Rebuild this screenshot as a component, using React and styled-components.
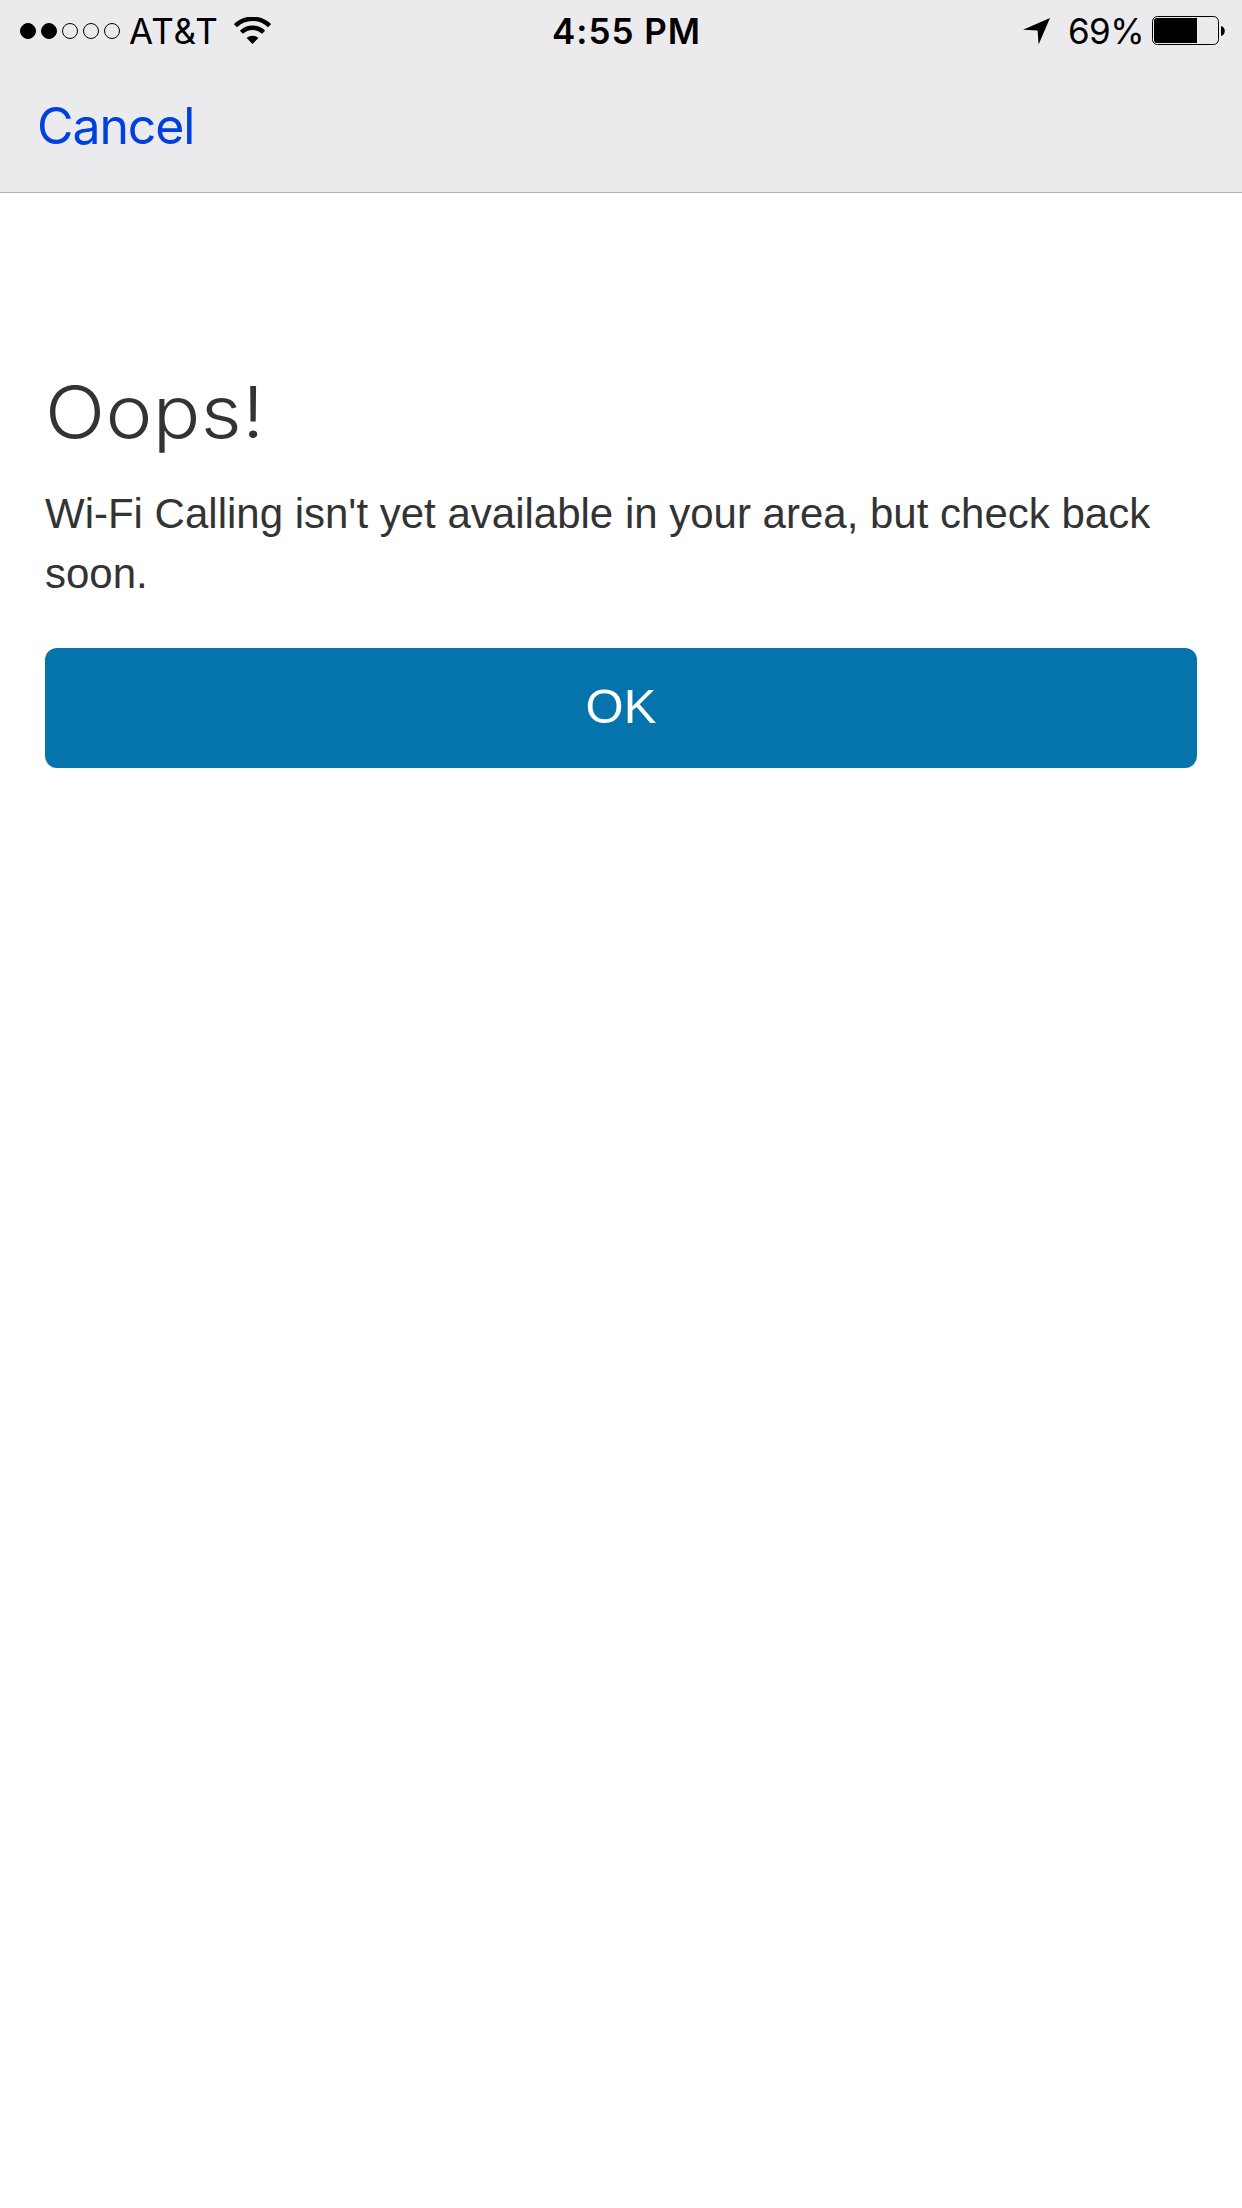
import React from "react";
import styled, { createGlobalStyle } from "styled-components";

const GlobalStyle = createGlobalStyle`
  * {
    box-sizing: border-box;
  }

  body {
    margin: 0;
    background: #fff;
  }
`;

const Screen = styled.div`
  width: 1242px;
  min-height: 2208px;
  background: #fff;
  font-family: "Liberation Sans", Arial, sans-serif;
  color: #333;
`;

const Header = styled.header`
  height: 193px;
  background: #ebebed;
  border-bottom: 1px solid #b2b2b4;
`;

const StatusBar = styled.div`
  display: grid;
  grid-template-columns: 1fr auto 1fr;
  height: 60px;
  padding: 0 17px 0 20px;
  font-family: Inter, sans-serif;
  font-size: 35px;
  line-height: 60px;
  color: #000;
  white-space: nowrap;

  svg {
    display: block;
    flex: none;
  }
`;

const StatusGroup = styled.div`
  display: flex;
  align-items: center;
  justify-content: ${({ $end }) => ($end ? "flex-end" : "flex-start")};
`;

const Signal = styled.div`
  display: flex;
  gap: 5px;
  margin-right: 9px;
`;

const Dot = styled.span`
  width: 16px;
  height: 16px;
  border: 1px solid #000;
  border-radius: 50%;
  background: ${({ $filled }) => ($filled ? "#000" : "transparent")};
`;

const Carrier = styled.span`
  margin: 1px 15px 0 0;
  letter-spacing: 1px;
`;

const Time = styled.span`
  padding: 1px 0 0 8px;
  font-weight: 600;
  letter-spacing: 1px;
`;

const Percent = styled.span`
  margin: 1px 8px 0 18px;
  letter-spacing: -0.6px;
`;

const NavBar = styled.nav`
  display: flex;
  align-items: center;
  height: 132px;
  padding-left: 37px;
`;

const Cancel = styled.button`
  padding: 0;
  border: 0;
  background: none;
  font: 400 50px/60px Inter, sans-serif;
  letter-spacing: -1.1px;
  color: #0040dd;
`;

const Content = styled.main`
  padding: 174px 45px 0;
`;

const Title = styled.h1`
  width: fit-content;
  margin: 0;
  font: 300 72px/90px Inter, sans-serif;
  letter-spacing: 0.3px;
  transform: scaleX(1.1);
  transform-origin: left;
`;

const Message = styled.p`
  margin: 27px 0 44px;
  font-size: 42px;
  line-height: 60px;
`;

const OkButton = styled.button`
  display: block;
  width: 100%;
  height: 120px;
  padding: 0 0 5px;
  border: 0;
  border-radius: 12px;
  background: #0574ac;
  font: 400 49px/60px "Liberation Sans", Arial, sans-serif;
  color: #fff;
`;

const WifiIcon = () => (
  <svg width="37" height="27" viewBox="0 0 37 27" fill="none" stroke="#000">
    <path d="M1.5 8.7a24.2 24.2 0 0 1 34 0" strokeWidth="4.4" />
    <path d="M7.4 15.3a15.8 15.8 0 0 1 22.2 0" strokeWidth="4.4" />
    <path d="M12.6 21.1a8.5 8.5 0 0 1 11.8 0L18.5 27z" fill="#000" stroke="none" />
  </svg>
);

const LocationIcon = () => (
  <svg width="27" height="29" viewBox="0 0 27 29">
    <path d="M27 2 15.6 28.5 14.6 14.4 0 13.8z" />
  </svg>
);

const BatteryIcon = () => (
  <svg width="73" height="29" viewBox="0 0 73 29">
    <rect x=".5" y=".5" width="66" height="28" rx="5" fill="none" stroke="#000" />
    <path d="M5 2h40v25H5a3 3 0 0 1-3-3V5a3 3 0 0 1 3-3z" />
    <path d="M69 10c5 1 5 9 0 10z" />
  </svg>
);

const App = () => {
  return (
    <>
      <GlobalStyle />
      <Screen>
        <Header>
          <StatusBar>
            <StatusGroup>
              <Signal>
                {[1, 2, 3, 4, 5].map((n) => (
                  <Dot key={n} $filled={n <= 2} />
                ))}
              </Signal>
              <Carrier>AT&amp;T</Carrier>
              <WifiIcon />
            </StatusGroup>
            <Time>4:55 PM</Time>
            <StatusGroup $end>
              <LocationIcon />
              <Percent>69%</Percent>
              <BatteryIcon />
            </StatusGroup>
          </StatusBar>
          <NavBar>
            <Cancel>Cancel</Cancel>
          </NavBar>
        </Header>
        <Content>
          <Title>Oops!</Title>
          <Message>
            Wi-Fi Calling isn't yet available in your area, but check back soon.
          </Message>
          <OkButton>OK</OkButton>
        </Content>
      </Screen>
    </>
  );
};

export default App;
